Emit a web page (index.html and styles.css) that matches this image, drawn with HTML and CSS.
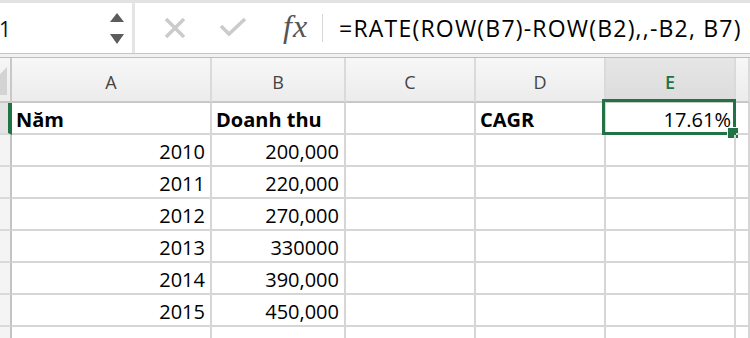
FILE: index.html
```html
<!DOCTYPE html>
<html lang="vi">
<head>
    <meta charset="UTF-8">
    <meta name="viewport" content="width=device-width, initial-scale=1.0">
    <title>CAGR - Doanh thu</title>
    <link rel="stylesheet" href="styles.css">
</head>
<body>

<!-- Thanh công thức -->
<div class="formula-bar">
    <div class="name-box">
        <span class="cell-name">1</span>
        <svg class="spin" width="14" height="32" viewBox="0 0 14 32">
            <polygon points="7,0 14,9 0,9"/>
            <polygon points="0,21 14,21 7,31"/>
        </svg>
    </div>
    <div class="tools">
        <svg class="icon-cancel" width="22" height="22" viewBox="0 0 22 22">
            <path d="M2 2 L20 20 M20 2 L2 20"/>
        </svg>
        <svg class="icon-enter" width="28" height="20" viewBox="0 0 28 20">
            <path d="M2 9 L10 17 L26 2"/>
        </svg>
        <span class="fx">fx</span>
        <span class="fx-sep"></span>
    </div>
    <div class="formula">=RATE(ROW(B7)-ROW(B2),,-B2, B7)</div>
</div>
<div class="bar-edge"></div>

<!-- Bảng tính -->
<div class="sheet">
    <div class="corner"><span class="select-all"></span></div>
    <div class="col-head">A</div>
    <div class="col-head">B</div>
    <div class="col-head">C</div>
    <div class="col-head">D</div>
    <div class="col-head active">E</div>
    <div class="col-head"></div>

    <div class="row-head active"></div>
    <div class="cell bold">Năm</div>
    <div class="cell bold">Doanh thu</div>
    <div class="cell"></div>
    <div class="cell bold">CAGR</div>
    <div class="cell num selected">17.61%<span class="handle"></span></div>
    <div class="cell"></div>

    <div class="row-head"></div>
    <div class="cell num">2010</div>
    <div class="cell num">200,000</div>
    <div class="cell"></div><div class="cell"></div><div class="cell"></div><div class="cell"></div>

    <div class="row-head"></div>
    <div class="cell num">2011</div>
    <div class="cell num">220,000</div>
    <div class="cell"></div><div class="cell"></div><div class="cell"></div><div class="cell"></div>

    <div class="row-head"></div>
    <div class="cell num">2012</div>
    <div class="cell num">270,000</div>
    <div class="cell"></div><div class="cell"></div><div class="cell"></div><div class="cell"></div>

    <div class="row-head"></div>
    <div class="cell num">2013</div>
    <div class="cell num">330000</div>
    <div class="cell"></div><div class="cell"></div><div class="cell"></div><div class="cell"></div>

    <div class="row-head"></div>
    <div class="cell num">2014</div>
    <div class="cell num">390,000</div>
    <div class="cell"></div><div class="cell"></div><div class="cell"></div><div class="cell"></div>

    <div class="row-head"></div>
    <div class="cell num">2015</div>
    <div class="cell num">450,000</div>
    <div class="cell"></div><div class="cell"></div><div class="cell"></div><div class="cell"></div>

    <div class="row-head"></div>
    <div class="cell"></div><div class="cell"></div><div class="cell"></div>
    <div class="cell"></div><div class="cell"></div><div class="cell"></div>
</div>

</body>
</html>
```

FILE: styles.css
```css
/* Dasar */
* {
    margin: 0;
    padding: 0;
    box-sizing: border-box;
}

body {
    width: 750px;
    height: 338px;
    overflow: hidden;
    background-color: #fff;
    font-family: "Open Sans", Arial, sans-serif;
    color: #000;
}

/* Thanh công thức */
.formula-bar {
    display: flex;
    align-items: stretch;
    height: 53px;
    border-top: 3px solid #e2e2e2;
    background-color: #fff;
}

.name-box {
    width: 135px;
    display: flex;
    align-items: center;
    border-right: 3px solid #e4e4e4;
}

.cell-name {
    font-size: 21px;
    color: #111;
    margin-left: -1px;
    margin-top: 2px;
}

.spin {
    margin-left: 99px;
    margin-top: 2px;
    fill: #5c5c5c;
}

.tools {
    display: flex;
    align-items: center;
}

.icon-cancel {
    margin-left: 29px;
    stroke: #cbcbcb;
    stroke-width: 3.5;
    fill: none;
}

.icon-enter {
    margin-left: 33px;
    margin-top: -2px;
    stroke: #cbcbcb;
    stroke-width: 3.5;
    fill: none;
}

.fx {
    margin-left: 36px;
    font-family: "Liberation Serif", "Times New Roman", serif;
    font-style: italic;
    font-size: 32px;
    letter-spacing: 1px;
    color: #555;
    margin-top: -4px;
}

.fx-sep {
    width: 1px;
    height: 28px;
    margin-left: 14px;
    background-color: #d8d8d8;
}

.formula {
    display: flex;
    align-items: center;
    margin-left: 16px;
    font-size: 23px;
    letter-spacing: 1.2px;
    white-space: nowrap;
    color: #000;
}

.bar-edge {
    height: 5px;
    border-top: 1px solid #c6c6c6;
    border-bottom: 1px solid #bdbdbd;
    background-color: #f1f1f1;
}

/* Bảng tính */
.sheet {
    display: grid;
    grid-template-columns: 12px 200px 134px 130px 130px 130px 1fr;
    grid-template-rows: 45px;
    grid-auto-rows: 32px;
}

.corner {
    display: flex;
    align-items: flex-end;
    padding-bottom: 6px;
    background: linear-gradient(#f6f6f6, #ececec);
    border-right: 2px solid #c8c8c8;
    border-bottom: 2px solid #c8c8c8;
}

.select-all {
    width: 7px;
    height: 28px;
    background-color: #d3d3d3;
    clip-path: polygon(0 26%, 100% 0, 100% 100%, 0 100%);
}

.col-head {
    display: flex;
    align-items: flex-end;
    justify-content: center;
    padding-bottom: 10px;
    font-size: 18px;
    line-height: 18px;
    color: #444;
    background: linear-gradient(#f7f7f7, #ececec);
    border-right: 2px solid #dadada;
    border-bottom: 2px solid #c8c8c8;
}

.col-head.active {
    background: linear-gradient(#e6e6e6, #dcdcdc);
    color: #217346;
    font-weight: 600;
}

.row-head {
    background-color: #f4f4f4;
    border-right: 2px solid #c4c4c4;
    border-bottom: 2px solid #dadada;
}

.row-head.active {
    background-color: #e3e3e3;
    border-right: 4px solid #217346;
}

.cell {
    position: relative;
    display: flex;
    align-items: flex-end;
    padding: 0 5px 3px 4px;
    font-size: 20px;
    line-height: 20px;
    white-space: nowrap;
    border-right: 2px solid #d6d6d6;
    border-bottom: 2px solid #d6d6d6;
}

.cell.bold {
    font-weight: 700;
}

.cell.num {
    justify-content: flex-end;
}

/* Ô đang chọn */
.cell.selected {
    padding-right: 3px;
}

.cell.selected::before {
    content: "";
    position: absolute;
    top: -4px;
    left: -4px;
    right: -2px;
    bottom: -2px;
    border: 3px solid #217346;
}

.handle {
    position: absolute;
    right: -5px;
    bottom: -6px;
    width: 12px;
    height: 12px;
    background-color: #217346;
    border: 1px solid #fff;
}
```
